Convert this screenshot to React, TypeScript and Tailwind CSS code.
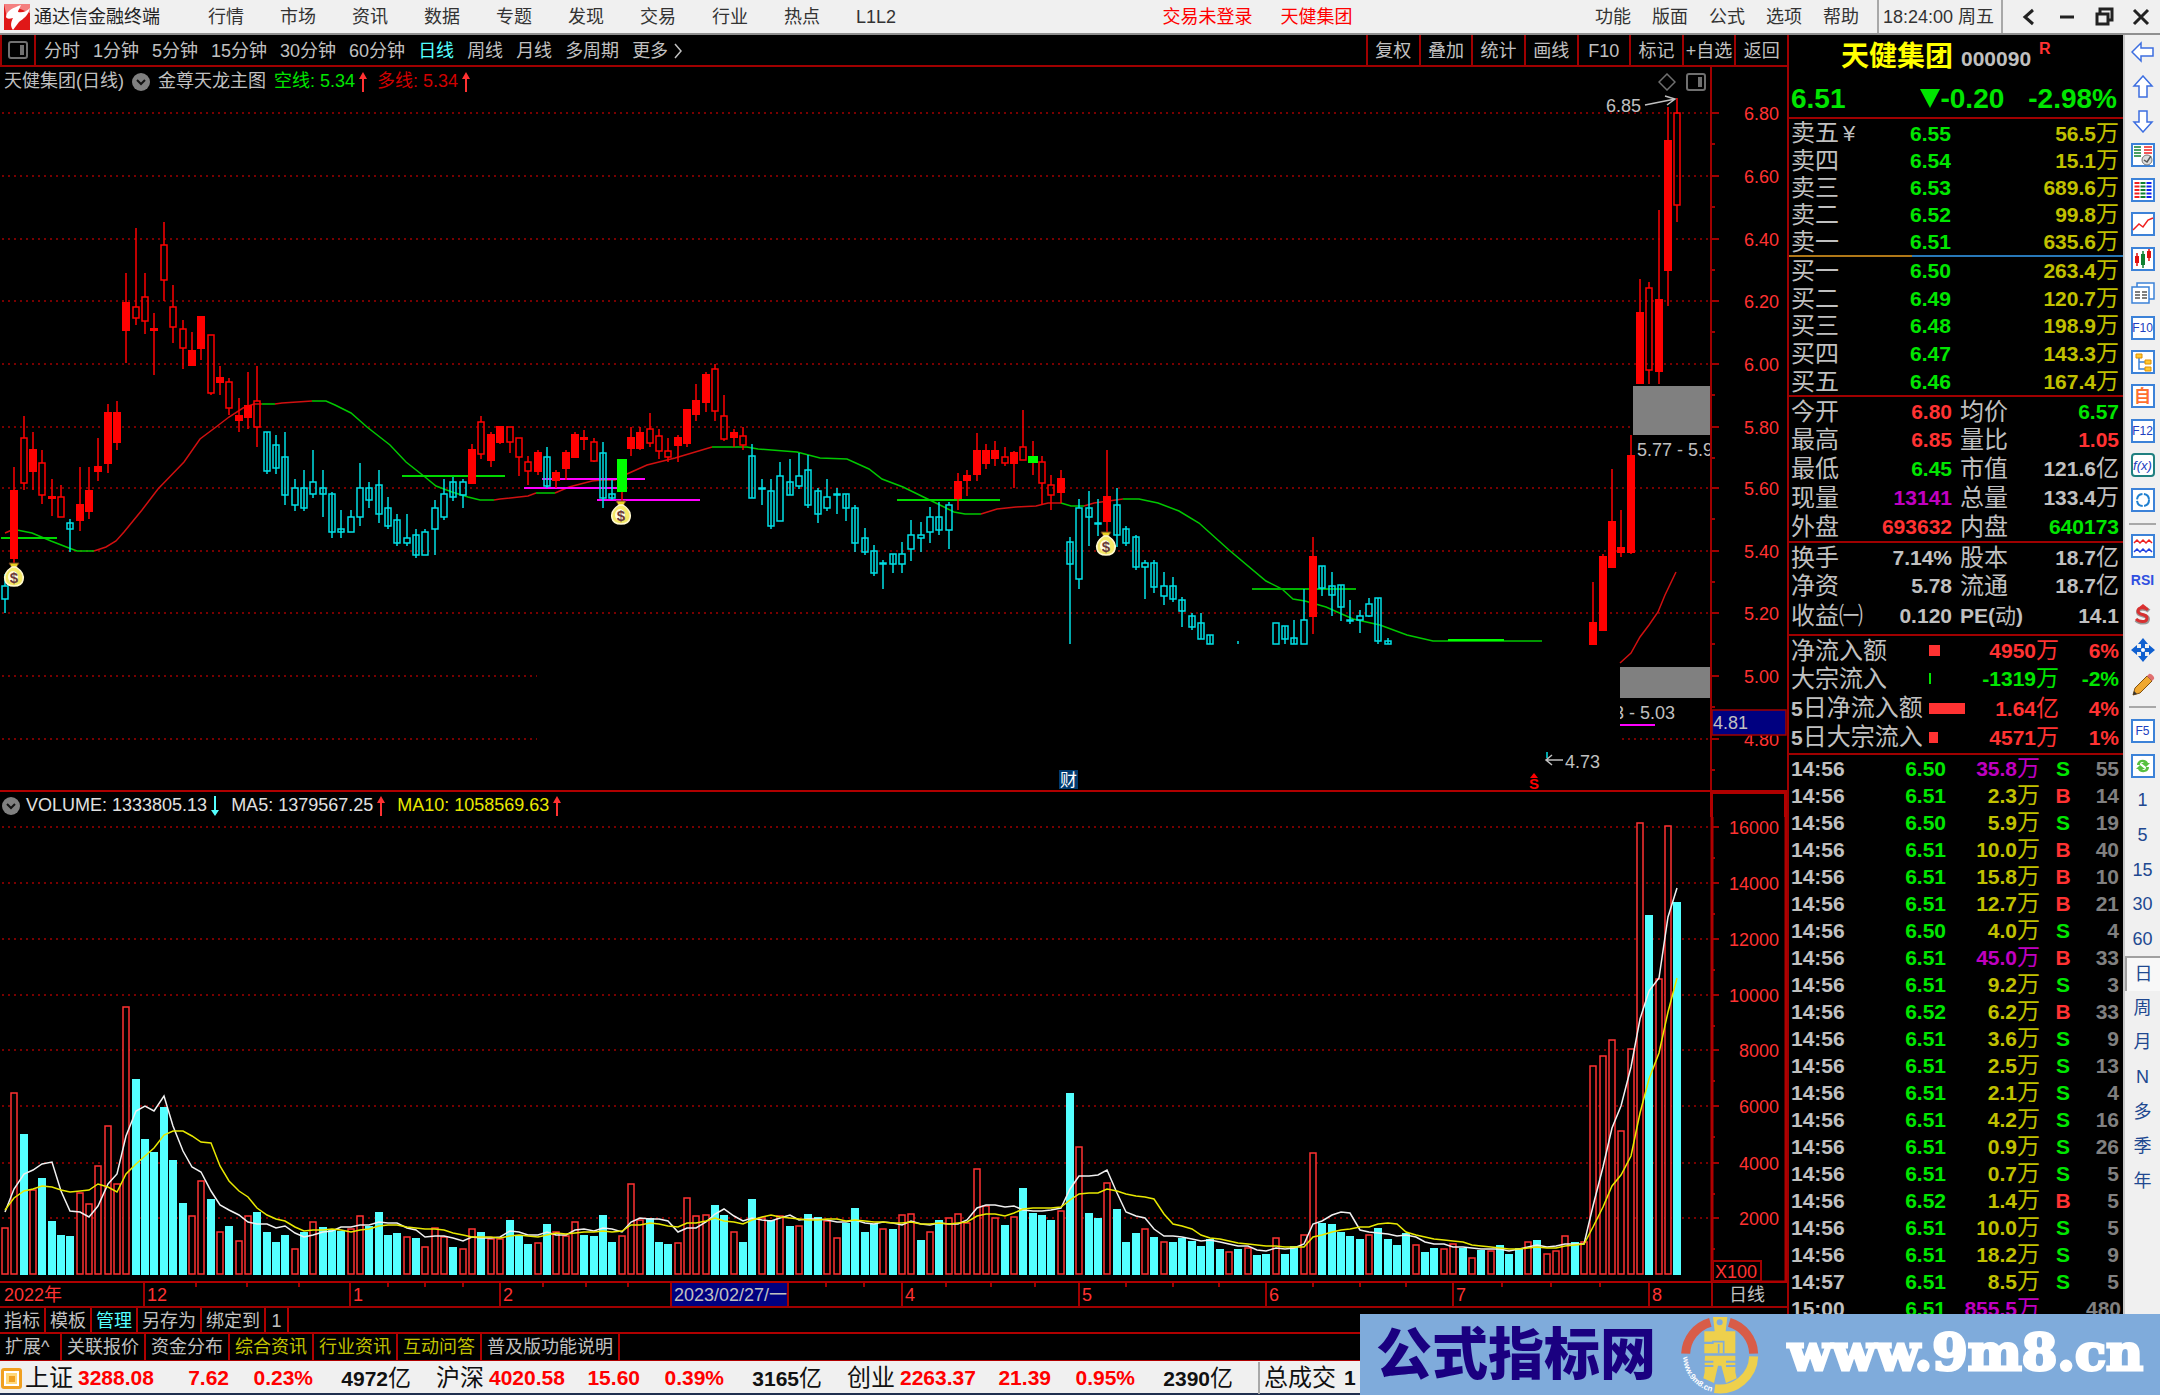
import type { ReactNode } from 'react';
import clsx from 'clsx';

type Candle = [number, string, number, number, number, number];

// index, kind, high, body top, body bottom, low
// R = filled red, r = hollow red, C = cyan with wick through, c = hollow cyan, G = signal bar
const candles: Candle[] = [
  [0, 'c', 574, 586, 599, 613], [1, 'R', 467, 491, 558, 563], [2, 'r', 416, 438, 483, 490], [3, 'R', 432, 450, 471, 490],
  [4, 'r', 450, 463, 495, 504], [5, 'R', 479, 497, 498, 516], [6, 'r', 485, 497, 517, 517], [7, 'C', 519, 523, 529, 552],
  [8, 'R', 467, 505, 520, 531], [9, 'R', 467, 491, 511, 519], [10, 'R', 438, 467, 471, 481], [11, 'R', 404, 413, 463, 473],
  [12, 'R', 401, 413, 442, 450], [13, 'R', 273, 303, 330, 363], [14, 'r', 228, 307, 318, 325], [15, 'r', 273, 297, 321, 334],
  [16, 'R', 313, 329, 330, 375], [17, 'r', 222, 245, 280, 301], [18, 'r', 285, 307, 327, 343], [19, 'r', 320, 329, 348, 369],
  [20, 'R', 332, 351, 365, 366], [21, 'R', 317, 317, 348, 360], [22, 'r', 335, 335, 393, 395], [23, 'R', 366, 378, 382, 395],
  [24, 'r', 378, 382, 408, 415], [25, 'R', 398, 416, 420, 432], [26, 'R', 372, 406, 417, 429], [27, 'r', 366, 401, 427, 447],
  [28, 'C', 432, 432, 471, 474], [29, 'C', 435, 445, 468, 474], [30, 'C', 432, 457, 495, 505], [31, 'c', 479, 488, 505, 511],
  [32, 'C', 470, 488, 508, 511], [33, 'c', 450, 482, 494, 498], [34, 'C', 470, 488, 494, 517], [35, 'C', 492, 494, 532, 538],
  [36, 'C', 510, 529, 532, 538], [37, 'c', 510, 517, 532, 532], [38, 'c', 463, 488, 517, 526], [39, 'C', 482, 488, 500, 508],
  [40, 'C', 470, 485, 514, 523], [41, 'C', 497, 508, 526, 529], [42, 'C', 514, 520, 543, 546], [43, 'c', 514, 538, 543, 546],
  [44, 'C', 529, 535, 555, 558], [45, 'c', 529, 532, 555, 555], [46, 'c', 500, 508, 529, 555], [47, 'c', 479, 494, 517, 520],
  [48, 'C', 477, 482, 497, 501], [49, 'c', 479, 482, 495, 508], [50, 'R', 444, 450, 483, 483], [51, 'r', 416, 422, 454, 459],
  [52, 'R', 432, 435, 460, 467], [53, 'R', 427, 427, 442, 444], [54, 'r', 427, 427, 442, 453], [55, 'r', 438, 438, 457, 476],
  [56, 'r', 456, 462, 471, 485], [57, 'R', 450, 453, 471, 475], [58, 'C', 447, 457, 486, 488], [59, 'R', 470, 473, 480, 488],
  [60, 'R', 450, 453, 468, 480], [61, 'R', 432, 435, 457, 457], [62, 'R', 430, 438, 439, 450], [63, 'r', 438, 442, 461, 462],
  [64, 'C', 442, 453, 498, 508], [65, 'C', 480, 494, 498, 500], [66, 'G', 459, 459, 492, 502], [67, 'R', 427, 438, 448, 456],
  [68, 'R', 427, 433, 448, 450], [69, 'r', 413, 429, 443, 447], [70, 'r', 429, 436, 451, 459], [71, 'r', 438, 451, 457, 462],
  [72, 'R', 435, 438, 445, 462], [73, 'R', 410, 410, 443, 447], [74, 'R', 384, 401, 414, 421], [75, 'R', 372, 375, 402, 412],
  [76, 'r', 364, 369, 411, 421], [77, 'r', 395, 416, 439, 441], [78, 'R', 429, 433, 437, 447], [79, 'r', 427, 436, 445, 450],
  [80, 'C', 444, 456, 498, 498], [81, 'C', 479, 488, 489, 505], [82, 'C', 479, 491, 526, 529], [83, 'c', 462, 476, 521, 521],
  [84, 'C', 459, 482, 495, 495], [85, 'c', 453, 476, 486, 489], [86, 'C', 455, 470, 505, 508], [87, 'C', 488, 491, 514, 523],
  [88, 'c', 479, 497, 508, 511], [89, 'C', 488, 494, 495, 514], [90, 'C', 494, 494, 508, 521], [91, 'C', 505, 508, 543, 552],
  [92, 'C', 528, 538, 552, 555], [93, 'C', 545, 551, 573, 576], [94, 'C', 560, 563, 564, 589], [95, 'C', 554, 554, 564, 573],
  [96, 'c', 542, 554, 564, 573], [97, 'c', 520, 535, 549, 561], [98, 'c', 522, 535, 538, 552], [99, 'c', 507, 517, 532, 543],
  [100, 'C', 502, 517, 530, 535], [101, 'c', 502, 505, 530, 549], [102, 'R', 473, 482, 498, 510], [103, 'R', 470, 476, 480, 496],
  [104, 'R', 433, 451, 474, 481], [105, 'R', 444, 451, 463, 469], [106, 'R', 441, 451, 458, 466], [107, 'r', 447, 457, 463, 466],
  [108, 'R', 451, 453, 463, 488], [109, 'r', 410, 447, 460, 460], [110, 'G', 441, 456, 463, 475], [111, 'r', 456, 462, 483, 505],
  [112, 'r', 475, 485, 495, 510], [113, 'R', 470, 479, 492, 503], [114, 'C', 537, 542, 564, 644], [115, 'c', 499, 508, 579, 589],
  [116, 'C', 491, 508, 517, 546], [117, 'C', 499, 523, 524, 536], [118, 'R', 450, 497, 521, 532], [119, 'C', 488, 505, 535, 547],
  [120, 'C', 526, 529, 543, 546], [121, 'C', 535, 537, 567, 570], [122, 'c', 560, 563, 567, 599], [123, 'C', 560, 563, 587, 593],
  [124, 'c', 572, 586, 596, 605], [125, 'C', 577, 586, 599, 602], [126, 'C', 597, 600, 611, 627], [127, 'C', 613, 616, 627, 630],
  [128, 'C', 613, 623, 639, 639], [129, 'C', 635, 635, 644, 644], [132, 'C', 641, 644, 644, 644], [136, 'c', 623, 623, 644, 644],
  [137, 'C', 626, 626, 639, 644], [138, 'C', 620, 638, 644, 644], [139, 'c', 589, 620, 644, 644], [140, 'R', 537, 557, 616, 634],
  [141, 'C', 566, 566, 588, 596], [142, 'C', 572, 586, 595, 616], [143, 'C', 585, 585, 607, 621], [144, 'C', 600, 620, 621, 624],
  [145, 'c', 610, 616, 620, 633], [146, 'c', 598, 604, 616, 617], [147, 'C', 598, 598, 641, 644], [148, 'C', 638, 641, 644, 644],
  [165, 'C', 752, 758, 758, 758], [170, 'R', 582, 623, 644, 644], [171, 'R', 554, 557, 630, 630], [172, 'R', 469, 522, 567, 567],
  [173, 'R', 510, 548, 552, 557], [174, 'R', 435, 456, 552, 554], [175, 'R', 279, 313, 383, 383], [176, 'r', 282, 288, 370, 384],
  [177, 'R', 210, 300, 371, 384], [178, 'R', 107, 141, 270, 306], [179, 'r', 98, 113, 205, 222],
];

// bar heights, negative = falling day
const volumes = [
  47, 182, -141, 85, -97, -54, -40, -39, 82, 71, 109, 149, 91, 268, -196, -136, -123, -168, -115, -72,
  59, 94, -76, 43, -49, 34, 59, -63, -43, -33, -40, 26, -43, 53, -48, -46, -44, 46, 59, -49,
  -63, -40, -42, 38, -37, 28, 47, 38, -28, 26, 46, -43, 36, 36, -55, -39, -31, 32, -51, 43,
  39, 53, -40, -39, -60, -33, 39, 91, 55, -57, -33, -31, 32, 77, 59, 60, -70, -60, 43, -33,
  -76, 57, -55, 59, -49, 49, -61, -58, 54, 37, -52, -67, -43, -51, 46, -46, 60, 61, -35, 43,
  -55, 57, 61, 52, 106, 69, 57, -50, 58, -87, -62, -60, -55, 64, -182, 128, -62, -57, 92, -66,
  -33, -42, 46, -38, 33, -33, -37, -34, -29, -36, -26, 23, -26, 27, -20, -21, 37, -21, -29, 40,
  122, -52, -51, -43, -39, -36, 40, -47, -36, -30, -42, 30, -23, -27, 26, 31, -27, 17, -25, 24,
  -30, -21, -27, 33, -35, 21, 24, 39, -33, 33, 209, 219, 235, 144, 226, 452, -360, 296, 449, -373,
];

const cx = (i: number) => Math.round(5 + i * 9.343);

const average = (span: number) => {
  const padded = [...Array(9).fill(66), ...volumes.map(Math.abs)];
  return volumes
    .map((_, i) => {
      const part = padded.slice(i + 10 - span, i + 10);
      const mean = part.reduce((a, b) => a + b, 0) / span;
      return `${cx(i)},${Math.round(1273 - mean)}`;
    })
    .join(' ');
};

const trend: [string, string][] = [
  ['r', '5,533 12,530'],
  ['g', '12,530 17,530 32,533 51,541 69,548 77,551 94,551'],
  ['r', '94,551 106,547 116,541 124,532 142,510 158,489 184,462 200,439 216,427 229,417 243,408 254,404 262,404'],
  ['g', '262,404 275,404'],
  ['r', '275,404 282,403 312,401'],
  ['g', '312,401 326,401 335,405 351,413 367,427 390,445 406,462 425,477 436,486 452,492 468,497 480,500 494,500'],
  ['r', '494,500 500,499 528,496 536,493'],
  ['g', '536,493 555,493'],
  ['r', '555,493 569,487 592,481 602,480 615,480 627,474 647,465 675,458 712,447'],
  ['g', '712,447 747,447 758,449 797,452 820,458 847,459 869,469 882,479 903,487 942,506 954,512 965,514 981,514'],
  ['r', '981,514 997,509 1016,507 1036,506 1048,503 1061,503'],
  ['g', '1061,503 1071,506 1084,506'],
  ['r', '1084,506 1094,503 1123,499'],
  ['g', '1123,499 1139,499 1158,503 1179,511 1199,523 1229,550 1266,581 1282,589 1293,599 1305,601 1326,607 1353,619 1380,625 1407,635 1433,641 1542,641'],
  ['r', '1620,663 1631,653 1640,637 1649,625 1658,612 1665,595 1676,572'],
];

const levels: [number, number, number, string][] = [
  [1, 57, 538, '#00d800'], [402, 505, 476, '#00d800'], [897, 1000, 500, '#00d800'], [1252, 1356, 589, '#00b400'],
  [1448, 1504, 640, '#00ff00'], [542, 645, 479, '#ff00ff'], [524, 617, 488, '#ff00ff'], [597, 700, 500, '#ff00ff'],
  [1620, 1655, 725, '#ff00ff'],
];

const priceAxis: [string, number][] = [
  ['6.80', 113], ['6.60', 176], ['6.40', 239], ['6.20', 301], ['6.00', 364], ['5.80', 427],
  ['5.60', 488], ['5.40', 551], ['5.20', 613], ['5.00', 676], ['4.80', 739],
];

const volumeAxis: [string, number][] = [
  ['16000', 826], ['14000', 882], ['12000', 938], ['10000', 994], ['8000', 1049], ['6000', 1105], ['4000', 1162], ['2000', 1217],
];

const sells = [['卖五', '6.55', '56.5万'], ['卖四', '6.54', '15.1万'], ['卖三', '6.53', '689.6万'], ['卖二', '6.52', '99.8万'], ['卖一', '6.51', '635.6万']];
const buys = [['买一', '6.50', '263.4万'], ['买二', '6.49', '120.7万'], ['买三', '6.48', '198.9万'], ['买四', '6.47', '143.3万'], ['买五', '6.46', '167.4万']];

const RED = 'text-[#ff3232]';
const GREEN = 'text-[#00e600]';
const GRAY = 'text-[#c0c0c0]';
const PURPLE = 'text-[#c000c0]';

const stats = [
  ['今开', '6.80', RED, '均价', '6.57', GREEN],
  ['最高', '6.85', RED, '量比', '1.05', RED],
  ['最低', '6.45', GREEN, '市值', '121.6亿', GRAY],
  ['现量', '13141', PURPLE, '总量', '133.4万', GRAY],
  ['外盘', '693632', RED, '内盘', '640173', GREEN],
];
const ratios = [
  ['换手', '7.14%', GRAY, '股本', '18.7亿', GRAY],
  ['净资', '5.78', GRAY, '流通', '18.7亿', GRAY],
  ['收益㈠', '0.120', GRAY, 'PE(动)', '14.1', GRAY],
];
const flows: [string, number, string, string, string][] = [
  ['净流入额', 11, '4950万', '6%', RED],
  ['大宗流入', 2, '-1319万', '-2%', GREEN],
  ['5日净流入额', 36, '1.64亿', '4%', RED],
  ['5日大宗流入', 9, '4571万', '1%', RED],
];
const ticks = [
  ['14:56', '6.50', '35.8万', 'S', '55'], ['14:56', '6.51', '2.3万', 'B', '14'], ['14:56', '6.50', '5.9万', 'S', '19'],
  ['14:56', '6.51', '10.0万', 'B', '40'], ['14:56', '6.51', '15.8万', 'B', '10'], ['14:56', '6.51', '12.7万', 'B', '21'],
  ['14:56', '6.50', '4.0万', 'S', '4'], ['14:56', '6.51', '45.0万', 'B', '33'], ['14:56', '6.51', '9.2万', 'S', '3'],
  ['14:56', '6.52', '6.2万', 'B', '33'], ['14:56', '6.51', '3.6万', 'S', '9'], ['14:56', '6.51', '2.5万', 'S', '13'],
  ['14:56', '6.51', '2.1万', 'S', '4'], ['14:56', '6.51', '4.2万', 'S', '16'], ['14:56', '6.51', '0.9万', 'S', '26'],
  ['14:56', '6.51', '0.7万', 'S', '5'], ['14:56', '6.52', '1.4万', 'B', '5'], ['14:56', '6.51', '10.0万', 'S', '5'],
  ['14:56', '6.51', '18.2万', 'S', '9'], ['14:57', '6.51', '8.5万', 'S', '5'], ['15:00', '6.51', '855.5万', '', '480'],
];

const indexes = [
  ['上证', '3288.08', '7.62', '0.23%', '4972亿'],
  ['沪深', '4020.58', '15.60', '0.39%', '3165亿'],
  ['创业', '2263.37', '21.39', '0.95%', '2390亿'],
];

// digits bold, the 万/亿 unit in the regular weight
function Amount({ value }: { value: string }) {
  const unit = value.match(/[万亿]$/)?.[0];
  return (
    <>
      {unit ? value.slice(0, -1) : value}
      {unit && <span className="text-[23px] font-normal">{unit}</span>}
    </>
  );
}

function Arrow({ down, className }: { down?: boolean; className: string }) {
  return (
    <svg viewBox="0 0 8 20" className={clsx('h-5 w-2', className)} fill="currentColor">
      {down ? <path d="M3 0h2v14h3l-4 6-4-6h3z" /> : <path d="M3 20h2V7h3L4 0 0 7h3z" />}
    </svg>
  );
}

function PanelIcon({ className }: { className?: string }) {
  return (
    <svg viewBox="0 0 20 18" className={clsx('h-[18px] w-5', className)} fill="none" stroke="#707070" strokeWidth="2">
      <rect x="1" y="1" width="18" height="16" rx="2" />
      <rect x="12" y="4" width="4" height="10" fill="#707070" stroke="none" />
    </svg>
  );
}

function ChevronBadge() {
  return (
    <svg viewBox="0 0 18 18" className="h-[18px] w-[18px]" fill="none">
      <circle cx="9" cy="9" r="9" fill="#808080" />
      <path d="M5 7l4 4 4-4" stroke="#111" strokeWidth="2" />
    </svg>
  );
}

function MoneyBag({ x, y }: { x: number; y: number }) {
  return (
    <g transform={`translate(${x} ${y})`}>
      <path d="M-5 0h10l-3 5h-4z" fill="#e8d020" stroke="#6b3a20" strokeWidth="1" />
      <path d="M-2 4h4c6 4 8 9 7 13-1 5-5 6-9 6s-8-1-9-6c-1-4 1-9 7-13z" fill="#f4e868" stroke="#fff8d0" strokeWidth="1.5" />
      <ellipse cx="-1" cy="14" rx="5" ry="6" fill="#fffbe0" />
      <text x="0" y="20" textAnchor="middle" fontSize="15" fontWeight="700" fill="#6b3a3a">$</text>
    </g>
  );
}

function Grid({ rows }: { rows: [string, number][] }) {
  return (
    <>
      {rows.map(([label, y]) => (
        <g key={label}>
          <line x1="2" x2="1710" y1={y} y2={y} stroke="#a00000" strokeWidth="1.5" strokeDasharray="2 4" />
          <line x1="1711" x2="1719" y1={y} y2={y} stroke="#a00000" strokeWidth="2" />
          <line x1="1711" x2="1715" y1={y + 31} y2={y + 31} stroke="#a00000" strokeWidth="2" />
          <text x="1779" y={y + 7} textAnchor="end" fontSize="18" fill="#ff3232">{label}</text>
        </g>
      ))}
    </>
  );
}

function CandleShape({ data }: { data: Candle }) {
  const [i, kind, high, top, bottom, low] = data;
  const x = cx(i);
  const color = kind === 'c' || kind === 'C' ? '#00e0e6' : '#ff0000';
  if (kind === 'G') {
    return (
      <>
        <line x1={x} x2={x} y1={high} y2={low} stroke="#ff0000" strokeWidth="1.5" />
        <rect x={x - 5} y={top} width="10" height={bottom - top} fill="#00ff00" />
      </>
    );
  }
  const hollow = kind === 'c' || kind === 'r';
  return (
    <g stroke={color} strokeWidth="1.5">
      <line x1={x} x2={x} y1={high} y2={hollow ? top : low} />
      {hollow && <line x1={x} x2={x} y1={bottom} y2={low} />}
      {bottom > top && <rect x={x - 3} y={top} width="6" height={bottom - top} fill={kind === 'R' ? color : 'none'} strokeWidth={kind === 'R' ? 2 : 1.5} />}
    </g>
  );
}

function PriceChart() {
  return (
    <svg viewBox="0 92 1787 700" className="block w-full">
      <Grid rows={priceAxis} />
      <rect x="537" y="645" width="1083" height="108" fill="#000" />
      <line x1="1711" x2="1711" y1="92" y2="791" stroke="#a00000" strokeWidth="2" />
      {trend.map(([tone, points]) => (
        <polyline key={points} points={points} fill="none" stroke={tone === 'g' ? '#00c800' : '#d01010'} strokeWidth="1.5" />
      ))}
      {levels.map(([x1, x2, y, color]) => (
        <line key={`${x1}-${y}`} x1={x1} x2={x2} y1={y} y2={y} stroke={color} strokeWidth="2" />
      ))}
      {candles.map((c) => (
        <CandleShape key={c[0]} data={c} />
      ))}
      <rect x="1633" y="386" width="77" height="49" fill="#808080" />
      <rect x="1620" y="667" width="90" height="31" fill="#808080" />
      <clipPath id="plot">
        <rect x="1620" y="435" width="90" height="300" />
      </clipPath>
      <g clipPath="url(#plot)" fontSize="18" fill="#c0c0c0">
        <text x="1637" y="456">5.77 - 5.93</text>
        <text x="1589" y="719">4.93 - 5.03</text>
      </g>
      <text x="1606" y="112" fontSize="18" fill="#c0c0c0">6.85</text>
      <path d="M1645 105l30-6m-10-3l10 3-8 6" fill="none" stroke="#c0c0c0" strokeWidth="1.5" />
      <text x="1565" y="768" fontSize="18" fill="#c0c0c0">4.73</text>
      <path d="M1563 760h-17m6-5l-6 5 6 5" fill="none" stroke="#c0c0c0" strokeWidth="1.5" />
      <MoneyBag x={14} y={563} />
      <MoneyBag x={621} y={501} />
      <MoneyBag x={1106} y={532} />
      <rect x="1059" y="770" width="19" height="19" fill="#003a70" />
      <text x="1060" y="786" fontSize="17" fill="#fff">财</text>
      <path d="M1530 778l4-5 4 5z" fill="#ff0000" />
      <text x="1534" y="789" textAnchor="middle" fontSize="15" fontWeight="700" fill="#ff0000">S</text>
      <rect x="1712" y="710" width="74" height="25" fill="#000080" stroke="#a00000" strokeWidth="1.5" />
      <text x="1713" y="729" fontSize="18" fill="#c0c0c0">4.81</text>
      <path d="M0 791h1787" stroke="#b00000" strokeWidth="2" />
    </svg>
  );
}

function VolumeChart() {
  return (
    <svg viewBox="0 816 1787 466" className="block w-full">
      <Grid rows={volumeAxis} />
      {volumes.map((v, i) =>
        v < 0 ? (
          <rect key={i} x={cx(i) - 4} y={1274 + v} width="8" height={-v} fill="#54ffff" />
        ) : (
          <rect key={i} x={cx(i) - 3} y={1274 - v} width="6" height={v - 1} fill="#000" stroke="#ff3232" strokeWidth="1.5" />
        ),
      )}
      <polyline points={average(5)} fill="none" stroke="#f0f0f0" strokeWidth="1.5" />
      <polyline points={average(10)} fill="none" stroke="#e8e800" strokeWidth="1.5" />
      <path d="M1712 816v465h74v-465" fill="none" stroke="#b00000" strokeWidth="3" />
      <rect x="1713" y="1260" width="48" height="20" fill="#000" stroke="#a00000" strokeWidth="2" />
      <text x="1715" y="1277" fontSize="18" fill="#ff3232">X100</text>
      <path d="M0 1281h1711" stroke="#b00000" strokeWidth="2" />
    </svg>
  );
}

const months: [string, string, number][] = [
  ['2022年', 'w-[143px]', 0], ['12', 'w-[206px]', 3], ['1', 'w-[150px]', 3], ['2', 'w-[171px]', 3], ['2023/02/27/一', 'w-[117px]', 0],
  ['', 'w-[114px]', 2], ['4', 'w-[177px]', 3], ['5', 'w-[187px]', 3], ['6', 'w-[187px]', 3], ['7', 'w-[196px]', 3], ['8', 'w-[63px]', 0],
];

function DateRow() {
  return (
    <div className="flex h-[25px] overflow-hidden border-b-2 border-[#a00000] text-[18px] leading-[25px] text-[#ff3232]">
      {months.map(([label, width, marks], i) => (
        <div
          key={i}
          className={clsx(
            'relative shrink-0 whitespace-nowrap pl-0.5',
            width,
            i > 0 && 'border-l-2 border-[#a00000]',
            i === 0 && 'pl-1',
            i === 4 && 'bg-[#000080] text-[#c0c0c0]',
          )}
        >
          {label}
          <div className="absolute inset-x-0 top-0 flex justify-evenly">
            {Array.from({ length: marks }, (_, m) => (
              <span key={m} className="h-1 w-0.5 bg-[#a00000]" />
            ))}
          </div>
        </div>
      ))}
      <div className="grow border-l-2 border-[#a00000] pl-4 text-[#c0c0c0]">日线</div>
    </div>
  );
}

function Tabs({ items, active, accent, className, pad }: { items: string[]; active?: string; accent?: string[]; className: string; pad: string }) {
  return (
    <div className={clsx('flex border-b-2 border-[#b00000] text-[18px] text-[#c0c0c0]', className)}>
      {items.map((t) => (
        <button
          key={t}
          className={clsx(
            'border-r-2 border-[#b00000]',
            pad,
            t === active && 'text-[#54ffff]',
            accent?.includes(t) && 'text-[#c0c000]',
            t === '1' && 'w-[23px]',
            t === '扩展^' && 'w-[62px] text-left',
          )}
        >
          {t}
        </button>
      ))}
    </div>
  );
}

function Header() {
  return (
    <header className="flex h-[35px] items-center border-b-2 border-[#909090] bg-[#f0f0f0] text-[18px] whitespace-nowrap text-[#333]">
      <svg viewBox="0 0 26 26" className="ml-1 h-[26px] w-[26px]">
        <rect width="26" height="26" fill="#e01818" />
        <path d="M0 0h26v9L14 4 3 14z" fill="#f48080" />
        <path d="M2 13C3 6 9 4 17 1c-1 3-3 5-3 7 4 1 8 0 12-4-2 8-7 11-11 14l-6 8c-3-4-2-8 0-12-4 1-6 1-7-1z" fill="#fff" />
      </svg>
      <h1 className="ml-1 pt-0.5 text-[#222]">通达信金融终端</h1>
      <nav className="ml-12 flex gap-9 pt-0.5">
        {['行情', '市场', '资讯', '数据', '专题', '发现', '交易', '行业', '热点', 'L1L2'].map((m) => (
          <button key={m}>{m}</button>
        ))}
      </nav>
      <div className="mx-auto flex gap-7 pt-0.5 pl-6 text-[#ff0000]">
        <button>交易未登录</button>
        <button>天健集团</button>
      </div>
      <nav className="mr-[18px] flex gap-[21px] pt-0.5">
        {['功能', '版面', '公式', '选项', '帮助'].map((m) => (
          <button key={m}>{m}</button>
        ))}
      </nav>
      <div className="flex h-full w-[126px] items-center border-x-2 border-[#a8a8a8] pt-0.5 pl-1">18:24:00 周五</div>
      <div className="ml-2 grid w-[149px] grid-cols-4 text-[#222]">
        {['M14 4L6 11l8 7', 'M4 11h14', 'M7 7V3h12v11h-4M4 8h11v10H4z', 'M4 4l14 14M18 4L4 18'].map((d) => (
          <button key={d} className="flex justify-center">
            <svg viewBox="0 0 22 22" className="h-[22px] w-[22px]" fill="none" stroke="currentColor" strokeWidth="3">
              <path d={d} />
            </svg>
          </button>
        ))}
      </div>
    </header>
  );
}

function PeriodBar() {
  return (
    <div className="flex h-8 border-b-2 border-[#a00000] text-[18px] text-[#c0c0c0]">
      <button className="flex w-9 items-center justify-center border-x-2 border-[#a00000]">
        <PanelIcon />
      </button>
      <div className="flex items-center gap-[13px] pt-0.5 pl-2 whitespace-nowrap">
        {['分时', '1分钟', '5分钟', '15分钟', '30分钟', '60分钟', '日线', '周线', '月线', '多周期'].map((p) => (
          <button key={p} className={p === '日线' ? 'text-[#54ffff]' : ''}>{p}</button>
        ))}
        <button className="flex items-center gap-1.5">
          更多
          <svg viewBox="0 0 8 16" className="h-4 w-2" fill="none" stroke="currentColor" strokeWidth="1.5">
            <path d="M1 1l6 7-6 7" />
          </svg>
        </button>
      </div>
      <div className="ml-auto grid w-[421px] grid-cols-8">
        {['复权', '叠加', '统计', '画线', 'F10', '标记', '+自选', '返回'].map((p) => (
          <button key={p} className="border-l-2 border-[#a00000] pt-0.5 whitespace-nowrap">{p}</button>
        ))}
      </div>
    </div>
  );
}

function ChartColumn() {
  return (
    <main className="min-w-0 flex-1">
      <PeriodBar />
      <div className="flex h-[25px] text-[18px] whitespace-nowrap text-[#c0c0c0]">
        <div className="flex grow items-center pt-1 pl-1">
          天健集团(日线)
          <span className="mx-2"><ChevronBadge /></span>
          金尊天龙主图
          <span className="ml-2 text-[#00e600]">空线: 5.34</span>
          <Arrow className="ml-1 text-[#ff3232]" />
          <span className="ml-2.5 text-[#d00000]">多线: 5.34</span>
          <Arrow className="ml-1 text-[#ff3232]" />
          <svg viewBox="0 0 18 18" className="ml-auto h-[18px] w-[18px]" fill="none" stroke="#707070" strokeWidth="1.5">
            <path d="M9 1l8 8-8 8-8-8z" />
          </svg>
          <PanelIcon className="mr-1 ml-2.5" />
        </div>
        <div className="w-[77px] border-l-2 border-[#a00000]" />
      </div>
      <PriceChart />
      <div className="flex h-[25px] text-[18px] whitespace-nowrap text-[#e0e0e0]">
        <div className="flex grow items-center pt-0.5 pl-0.5">
          <ChevronBadge />
          <span className="ml-1.5">VOLUME: 1333805.13</span>
          <Arrow down className="ml-1 text-[#54ffff]" />
          <span className="ml-3">MA5: 1379567.25</span>
          <Arrow className="ml-1 text-[#ff3232]" />
          <span className="ml-3 text-[#e8e800]">MA10: 1058569.63</span>
          <Arrow className="ml-1 text-[#ff3232]" />
        </div>
        <div className="w-[77px] border-x-3 border-t-2 border-[#b00000]" />
      </div>
      <VolumeChart />
      <DateRow />
      <Tabs className="h-[26px]" pad="px-1" items={['指标', '模板', '管理', '另存为', '绑定到', '1']} active="管理" />
      <Tabs
        className="h-7"
        pad="px-[5px]"
        items={['扩展^', '关联报价', '资金分布', '综合资讯', '行业资讯', '互动问答', '普及版功能说明']}
        accent={['综合资讯', '行业资讯', '互动问答']}
      />
    </main>
  );
}

function BookTable({ rows, className }: { rows: string[][]; className: string }) {
  return (
    <table className={clsx('w-full table-fixed', className)}>
      <tbody>
        {rows.map(([name, price, amount]) => (
          <tr key={name} className="h-[27px]">
            <th className="w-[121px] pl-0.5 text-left text-[24px] font-normal">
              {name}
              {name === '卖五' && <span className="pl-1 text-[22px]">¥</span>}
            </th>
            <td className="text-[#00e600]">{price}</td>
            <td className="pr-1 text-right text-[#c0c000]"><Amount value={amount} /></td>
          </tr>
        ))}
      </tbody>
    </table>
  );
}

function StatTable({ rows, className }: { rows: string[][]; className: string }) {
  return (
    <table className={clsx('w-full table-fixed border-t-2 border-[#a00000]', className)}>
      <tbody>
        {rows.map(([a, av, ac, b, bv, bc]) => (
          <tr key={a} className="h-[29px]">
            <th className="w-[76px] pl-0.5 text-left text-[24px] font-normal">{a}</th>
            <td className={clsx('w-[87px] text-right', ac)}>{av}</td>
            <th className={clsx('w-[76px] pl-2 text-left', b.startsWith('PE') ? 'text-[21px]' : 'text-[24px] font-normal')}>
              {b.startsWith('PE') ? <>PE(<span className="font-normal">动</span>)</> : b}
            </th>
            <td className={clsx('pr-1 text-right', bc)}><Amount value={bv} /></td>
          </tr>
        ))}
      </tbody>
    </table>
  );
}

function QuotePanel() {
  return (
    <aside className="w-[336px] shrink-0 overflow-hidden border-l-2 border-[#a00000] text-[21px] leading-[27px] font-bold whitespace-nowrap text-[#c0c0c0]">
      <div className="flex h-[43px] items-center pl-[52px]">
        <h2 className="text-[28px] text-[#ffff00]">天健集团</h2>
        <span className="mt-1 ml-2">000090</span>
        <sup className="ml-2 text-[16px] text-[#ff3232]">R</sup>
      </div>
      <div className="flex h-[41px] items-center border-b-2 border-[#a00000] pt-0.5 pr-1.5 pl-0.5 text-[28px] text-[#00e600]">
        6.51
        <svg viewBox="0 0 20 19" className="ml-auto h-[19px] w-5" fill="currentColor"><path d="M0 0h20L10 19z" /></svg>
        <span>-0.20</span>
        <span className="ml-6">-2.98%</span>
      </div>
      <BookTable rows={sells} className="h-[136px]" />
      <div className="flex h-0.5">
        <div className="w-[123px] bg-[#b07818]" />
        <div className="grow bg-[#2878b8]" />
      </div>
      <BookTable rows={buys} className="h-[138px]" />
      <StatTable rows={stats} className="h-[146px]" />
      <StatTable rows={ratios} className="mb-1 h-[89px]" />
      <table className="mb-px h-[118px] w-full table-fixed border-t-2 border-[#a00000]">
        <tbody>
          {flows.map(([name, size, amount, pct, tone]) => (
            <tr key={name} className="h-[29px]">
              <th className="w-[140px] pl-0.5 text-left text-[24px] font-normal">
                {name.startsWith('5') ? <><span className="text-[21px] font-bold">5</span>{name.slice(1)}</> : name}
              </th>
              <td className="w-[38px]">
                <div className={clsx('h-[11px]', tone === RED ? 'bg-[#ff3232]' : 'bg-[#00e600]')} style={{ width: size }} />
              </td>
              <td className={clsx('w-[92px] text-right', tone)}><Amount value={amount} /></td>
              <td className={clsx('pr-1 text-right', tone)}>{pct}</td>
            </tr>
          ))}
        </tbody>
      </table>
      <table className="w-full table-fixed border-t-2 border-[#a00000]">
        <tbody>
          {ticks.map(([time, price, amount, side, count], i) => (
            <tr key={i} className="h-[27px]">
              <td className="w-[75px] pl-0.5">{time}</td>
              <td className="w-[82px] text-right text-[#00e600]">{price}</td>
              <td className={clsx('w-[94px] text-right', ['35.8万', '45.0万', '855.5万'].includes(amount) ? PURPLE : 'text-[#c0c000]')}>
                <Amount value={amount} />
              </td>
              <td className={clsx('w-[46px] text-center', side === 'S' ? GREEN : RED)}>{side}</td>
              <td className="pr-1 text-right text-[#808080]">{count}</td>
            </tr>
          ))}
        </tbody>
      </table>
    </aside>
  );
}

function Framed({ children, stroke = '#3c82d8' }: { children: ReactNode; stroke?: string }) {
  return (
    <svg viewBox="0 0 24 24" className="h-6 w-6" fill="none">
      <rect x="1" y="1" width="22" height="22" fill="#fff" stroke={stroke} strokeWidth="2" />
      {children}
    </svg>
  );
}

function Glyph({ children }: { children: ReactNode }) {
  return <svg viewBox="0 0 24 24" className="h-6 w-6" fill="none">{children}</svg>;
}

function FrameText({ label }: { label: string }) {
  return (
    <span className="flex h-6 w-6 items-center justify-center border-2 border-[#3c82d8] bg-white text-[12px] leading-none text-[#2040c0]">
      {label}
    </span>
  );
}

const tools: [string, ReactNode][] = [
  ['返回', <Glyph><path d="M1 12l9-9v5h12v8H10v5z" fill="#fff" stroke="#3c6ee0" strokeWidth="1.5" /></Glyph>],
  ['向上', <Glyph><path d="M12 1l9 10h-5v11H8V11H3z" fill="#fff" stroke="#3c6ee0" strokeWidth="1.5" /></Glyph>],
  ['向下', <Glyph><path d="M12 23l9-10h-5V2H8v11H3z" fill="#fff" stroke="#3c6ee0" strokeWidth="1.5" /></Glyph>],
  ['报价', <Framed>
    <path d="M3 4h7M3 7h7M3 10h7M3 13h7" stroke="#108030" strokeWidth="1.5" />
    <path d="M13 4h8M13 7h8M13 10h8" stroke="#f02020" strokeWidth="1.5" />
    <circle cx="16" cy="17" r="5" fill="#ddd" stroke="#777" /><path d="M13 17l3 2 4-6" stroke="#555" strokeWidth="1.5" />
  </Framed>],
  ['列表', <Framed>
    <path d="M6 4v16" stroke="#f02020" strokeWidth="5" strokeDasharray="2 1.5" />
    <path d="M12 4v16" stroke="#108030" strokeWidth="5" strokeDasharray="2 1.5" />
    <path d="M18 4v16" stroke="#1020f0" strokeWidth="5" strokeDasharray="2 1.5" />
  </Framed>],
  ['走势', <Framed><path d="M2 18l6-6 4 3 5-7 5-2" stroke="#f02020" strokeWidth="1.5" /></Framed>],
  ['K线', <Framed>
    <path d="M6 6v13M18 2v12" stroke="#e01010" strokeWidth="1.5" /><path d="M12 4v17" stroke="#108030" strokeWidth="1.5" />
    <path d="M4 9h4v7H4zM16 4h4v7h-4z" fill="#e01010" /><path d="M10 7h4v11h-4z" fill="#108030" />
  </Framed>],
  ['资料', <Glyph>
    <path d="M6 2h17v16H6z" fill="#fff" stroke="#3c82d8" strokeWidth="1.5" /><path d="M1 6h17v16H1z" fill="#fff" stroke="#3c82d8" strokeWidth="1.5" />
    <path d="M4 11h5M11 11h5M4 14h5M11 14h5M4 17h5M11 17h5" stroke="#555" strokeWidth="1.5" />
  </Glyph>],
  ['F10', <FrameText label="F10" />],
  ['板块', <Framed>
    <path d="M8 7v12h6M8 12h6" stroke="#3c82d8" strokeWidth="1.5" />
    <path d="M5 4h6v4H5zM14 10h6v4h-6zM14 17h6v4h-6z" fill="#ffc830" stroke="#e09000" />
  </Framed>],
  ['自选', <span className="flex h-6 w-6 items-center justify-center border-2 border-[#3c82d8] bg-white text-[17px] leading-none font-bold text-[#ff7030]">自</span>],
  ['F12', <FrameText label="F12" />],
  ['公式', <span className="flex h-6 w-6 items-center justify-center rounded border-2 border-[#208080] bg-white text-[13px] leading-none text-[#2040c0] italic">f(x)</span>],
  ['周期', <Framed><circle cx="12" cy="12" r="6" stroke="#2080d0" strokeWidth="2" strokeDasharray="8 1.5" /></Framed>],
];

const drawTools: [string, ReactNode][] = [
  ['叠加', <Framed>
    <path d="M3 9l3-3 3 3 3-3 3 3 3-3 3 3" stroke="#f02020" strokeWidth="1.5" /><path d="M3 18l3-3 3 3 3-3 3 3 3-3 3 3" stroke="#2040e0" strokeWidth="1.5" />
  </Framed>],
  ['RSI', <span className="text-[14px] font-bold text-[#3050e0]">RSI</span>],
  ['信号', <Glyph>
    <path d="M7 5l5-4 5 4z" fill="#e03030" />
    <path d="M18 8c-3-3-11-3-11 1 0 5 10 2 10 7 0 5-9 4-12 1" stroke="#999" strokeWidth="4" /><path d="M17 7c-3-3-10-3-10 1 0 5 9 2 9 7 0 5-8 4-11 1" stroke="#d83030" strokeWidth="3" />
  </Glyph>],
  ['移动', <Glyph>
    <path d="M12 0l5 6h-3v4h4V7l6 5-6 5v-3h-4v4h3l-5 6-5-6h3v-4H6v3l-6-5 6-5v3h4V6H7z" fill="#1060d0" /><circle cx="12" cy="12" r="2" fill="#fff" />
  </Glyph>],
  ['画笔', <Glyph>
    <path d="M2 22l2-7L16 3l5 5L9 20z" fill="#f0a830" stroke="#805010" /><path d="M16 3l2-2c2-1 6 3 5 5l-2 2z" fill="#e07070" /><path d="M2 22l1-4 3 3z" fill="#333" />
  </Glyph>],
];

const refreshTools: [string, ReactNode][] = [
  ['F5', <FrameText label="F5" />],
  ['刷新', <Framed>
    <path d="M6 11c0-6 9-7 11-2h2l-4 4-5-4h3c-2-2-4-1-4 2zM18 13c0 6-9 7-11 2H5l4-4 5 4h-3c2 2 4 1 4-2z" fill="#58c040" />
  </Framed>],
];

function Toolbar() {
  const item = 'flex items-center justify-center';
  return (
    <div className="w-[37px] shrink-0 border-l-2 border-[#c8c8c8] bg-[#f0f0f0]">
      <div className="grid h-[482px] grid-rows-14">
        {tools.map(([name, icon]) => (
          <button key={name} aria-label={name} className={item}>{icon}</button>
        ))}
      </div>
      <hr className="mx-1 mt-1.5 mb-1 border-t-2 border-[#a8a8a8]" />
      <div className="grid h-[173px] grid-rows-5">
        {drawTools.map(([name, icon]) => (
          <button key={name} aria-label={name} className={item}>{icon}</button>
        ))}
      </div>
      <hr className="mx-1 mt-1 mb-1.5 border-t-2 border-[#a8a8a8]" />
      <div className="grid h-[484px] grid-rows-14 text-[18px] leading-none text-[#204890]">
        {refreshTools.map(([name, icon]) => (
          <button key={name} aria-label={name} className={item}>{icon}</button>
        ))}
        {['1', '5', '15', '30', '60', '日', '周', '月', 'N', '多', '季', '年'].map((p) => (
          <button key={p} className={clsx(item, p === '日' && 'border-t-2 border-l-2 border-[#a0a0a0] bg-[#f8f8f8]')}>{p}</button>
        ))}
      </div>
    </div>
  );
}

function Ticker() {
  return (
    <footer className="flex h-[34px] items-center border-b-2 border-[#203050] bg-[#f0f0f0] pt-0.5 text-[21px] leading-8 font-bold whitespace-nowrap text-[#ff0000]">
      <svg viewBox="0 0 21 21" className="mr-[3px] ml-px h-[21px] w-[21px]">
        <rect width="21" height="21" rx="3" fill="#f0a020" />
        <rect x="4" y="4" width="13" height="13" fill="#ffd878" stroke="#fff" strokeWidth="2" />
        <rect x="8" y="8" width="6" height="6" fill="#f0a020" />
      </svg>
      {indexes.map(([name, value, change, pct, amount]) => (
        <div key={name} className="mr-[25px] flex">
          <span className="w-[53px] text-[24px] font-normal text-[#111]">{name}</span>
          <span className="w-[78px]">{value}</span>
          <span className="w-[73px] text-right">{change}</span>
          <span className="w-[84px] text-right">{pct}</span>
          <span className="w-[98px] text-right text-[#111]"><Amount value={amount} /></span>
        </div>
      ))}
      <span className="border-l-2 border-[#a8a8a8] pl-1 text-[24px] font-normal text-[#111]">总成交</span>
      <span className="ml-2 text-[#111]">1</span>
    </footer>
  );
}

function SiteBanner() {
  return (
    <a href="#" className="absolute right-0 bottom-0 flex h-[81px] w-[800px] items-center bg-[#7fabdb] whitespace-nowrap">
      <span className="ml-4 text-[56px] leading-none font-black text-[#1a0080]">公式指标网</span>
      <svg viewBox="122 28 240 240" className="ml-6 h-20 w-20 shrink-0" fill="none">
        <path d="M139 144A102 102 0 0 1 213 50M270 50A102 102 0 0 1 343 144" stroke="#d85c48" strokeWidth="27" />
        <path d="M343 152A102 102 0 0 1 226 249" stroke="#eed04c" strokeWidth="27" />
        <path d="M221 34h43l-5 43h29v66h-93v-28h28v-7h-28V77h31z" fill="#eed04c" />
        <path d="M197 150h91v15h-28v6h28v7h-28v6h28v16l4 18-32 14-14-52h-10l-12 52-32-14 4-18v-16h26v-6h-26v-7h26v-6h-26z" fill="#eed04c" />
        <path d="M238 143v-28M253 143v-35h-35" stroke="#7fabdb" strokeWidth="5" />
        <circle cx="241" cy="50" r="9" fill="#7fabdb" />
        <path id="rim" d="M131 154A112 112 0 0 0 226 260" />
        <text fontSize="24" fontWeight="700" fill="#fff"><textPath href="#rim">www.9m8.cn</textPath></text>
      </svg>
      <span className="ml-7 pb-1 font-['DejaVu_Serif',serif] text-[51px] leading-none font-bold text-white [-webkit-text-stroke:3px_#fff]">www.9m8.cn</span>
    </a>
  );
}

export default function App() {
  return (
    <div className="relative min-h-screen bg-black font-['Liberation_Sans','Noto_Sans_CJK_SC',sans-serif]">
      <Header />
      <div className="flex h-[1326px] overflow-hidden">
        <ChartColumn />
        <QuotePanel />
        <Toolbar />
      </div>
      <Ticker />
      <SiteBanner />
    </div>
  );
}
